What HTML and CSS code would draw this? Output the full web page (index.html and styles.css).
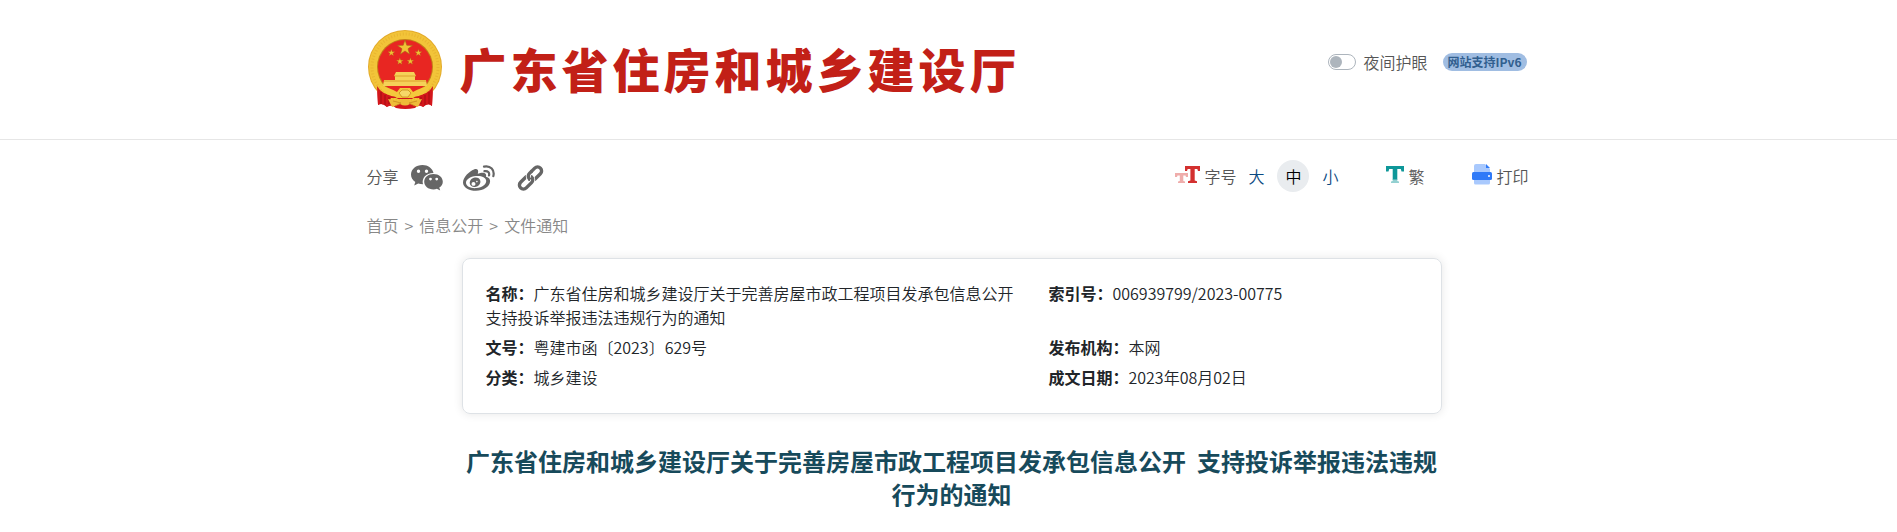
FILE: index.html
```html
<!DOCTYPE html>
<html lang="zh-CN">
<head>
    <meta charset="UTF-8">
    <meta name="viewport" content="width=device-width, initial-scale=1.0">
    <title>广东省住房和城乡建设厅</title>
    <link rel="stylesheet" href="styles.css">
</head>
<body>
    <header class="header">
        <div class="container header-inner">
            <a class="logo" href="#">
                <svg class="emblem" viewBox="0 0 74 80" aria-hidden="true">
                    <!-- 红绸 -->
                    <path d="M9 54 L20 62 H54 L65 54 L64 76 Q60 72 55 77 Q50 74 47 78 Q37 80 28 78 Q24 74 19 77 Q14 72 10 75 Z" fill="#d3161b"/>
                    <!-- 金环 -->
                    <circle cx="37" cy="37" r="37" fill="#e3aa2a"/>
                    <circle cx="37" cy="37" r="36" fill="#f2c439"/>
                    <circle cx="37" cy="37" r="33" fill="none" stroke="#e9b531" stroke-width="3" stroke-dasharray="1 2"/>
                    <path d="M9 56 Q14 65 25 65 L30 69 H44 L49 65 Q60 65 65 56 L64 76 Q60 72 55 77 L51 68 H23 L19 77 Q14 72 10 75 Z" fill="#d3161b"/>
                    <path d="M13 62 V74 M17 65 V75 M21 67 V74 M53 67 V74 M57 65 V75 M61 62 V74" stroke="#a30d12" stroke-width="1"/>
                    <circle cx="37" cy="37" r="28" fill="#c47c18"/>
                    <circle cx="37" cy="37" r="27" fill="#e82622"/>
                    <!-- 五星 -->
                    <g fill="#f0c235" stroke="#a8641a" stroke-width="0.600">
                        <path id="star" d="M37 10 L38.800 15.300 L44.500 15.400 L40 18.800 L41.600 24.200 L37 21 L32.400 24.200 L34 18.800 L29.500 15.400 L35.200 15.300 Z"/>
                        <use href="#star" transform="translate(6 14.500) scale(.47)"/>
                        <use href="#star" transform="translate(33 14.500) scale(.47)"/>
                        <use href="#star" transform="translate(14.500 23) scale(.47)"/>
                        <use href="#star" transform="translate(25 23) scale(.47)"/>
                    </g>
                    <!-- 天安门 -->
                    <path d="M28 42 H46 L48 46 H26 Z M27 46 H47 V51 H27 Z M16 50 H58 L59 56 H15 Z" fill="#f5d158"/>
                    <path d="M26 46 H48 M16 51 H58" stroke="#d59422" stroke-width="0.800"/>
                    <!-- 齿轮与麦穗 -->
                    <path d="M11 55 Q22 58 29 62 L32 58 H42 L45 62 Q52 58 63 55 Q58 66 45 67 Q37 64 29 67 Q16 66 11 55 Z" fill="#f4c83c"/>
                    <path d="M31 63 L34 60 H40 L43 63 L40 67 H34 Z" fill="#f7d768" stroke="#c98a1c" stroke-width="0.800"/>
                    <path d="M20 69 L31 71 Q37 67 43 71 L54 69 L50 77 L42 74 Q37 77 32 74 L24 77 Z" fill="#eebb38"/>
                    <path d="M25 71 L33 73 L27 76 M49 71 L41 73 L47 76" fill="none" stroke="#c98a1c" stroke-width="0.800"/>
                </svg>
                <span class="site-name">广东省住房和城乡建设厅</span>
            </a>
            <div class="header-tools">
                <input class="switch" type="checkbox" id="nightMode">
                <label for="nightMode">夜间护眼</label>
                <span class="badge">网站支持IPv6</span>
            </div>
        </div>
    </header>

    <main class="container">
        <div class="toolbar">
            <div class="share">
                <span>分享</span>
                <a href="#" aria-label="微信">
                    <svg width="32" height="26" viewBox="0 0 32 26" fill="#666">
                        <path fill-rule="evenodd" d="M11.500 0 C5 0 0 4.200 0 9.600 C0 12.700 1.600 15.300 4.300 17.100 L3.200 20.500 L7.200 18.500 C8.900 19 10.300 19.200 12 19.200 C10.300 13 15.500 7.800 22.500 8 C21.500 3.300 17 0 11.500 0 Z M7.500 4.600 a1.700 1.700 0 1 1 0 3.400 a1.700 1.700 0 1 1 0-3.400 Z M15.500 4.600 a1.700 1.700 0 1 1 0 3.400 a1.700 1.700 0 1 1 0-3.400 Z"/>
                        <path fill-rule="evenodd" d="M22.500 9 C17.200 9 13.200 12.400 13.200 16.700 C13.200 21 17.200 24.400 22.500 24.400 C23.700 24.400 24.800 24.200 25.900 23.800 L29.200 25.600 L28.300 22.600 C30.600 21.200 31.800 19.100 31.800 16.700 C31.800 12.400 27.800 9 22.500 9 Z M19.500 12.700 a1.400 1.400 0 1 1 0 2.800 a1.400 1.400 0 1 1 0-2.800 Z M25.700 12.700 a1.400 1.400 0 1 1 0 2.800 a1.400 1.400 0 1 1 0-2.800 Z"/>
                    </svg>
                </a>
                <a href="#" aria-label="微博">
                    <svg width="32" height="26" viewBox="0 0 32 26" fill="#666">
                        <path fill-rule="evenodd" d="M11 4.400 C14.500 3.200 16 5.400 14.800 8.800 C18.500 7 24.300 6.800 23 11.800 C26 12.600 27.300 14.200 27.100 16.600 C26.600 21.800 20.500 25.800 13 25.800 C5.800 25.800 0 22.400 0 17.500 C0 12 6.500 6 11 4.400 Z M13 11 C7 11.500 2.800 14.500 3 18 C3.200 21.400 7.800 23.600 13.400 23.100 C19.200 22.500 23.500 19.200 23.200 15.800 C22.900 12.500 18.500 10.500 13 11 Z"/>
                        <path fill-rule="evenodd" d="M12 12.600 C8.700 13 6.400 15.800 6.800 18.500 C7.200 21.200 10 22.500 12.900 21.800 C16 21 17.900 18.200 17.300 15.700 C16.700 13.400 14.600 12.300 12 12.600 Z M10.500 17 a2 1.900 0 1 1 0 3.800 a2 1.900 0 1 1 0-3.800 Z M13.900 15.800 a.8.8 0 1 1 0 1.600 a.8.8 0 1 1 0-1.600 Z"/>
                        <path d="M21 1.600 C27.500 .2 32 5 30.300 11.200 M21.500 6.200 C24.800 5.500 26.800 7.600 26 10.500" fill="none" stroke="#666" stroke-width="2.200" stroke-linecap="round"/>
                    </svg>
                </a>
                <a href="#" aria-label="复制链接">
                    <svg width="32" height="26" viewBox="0 0 32 26">
                        <g transform="translate(15.500 13) rotate(-45)" fill="none" stroke="#666" stroke-width="3.400">
                            <rect x="-1.500" y="-4" width="15.500" height="8" rx="4"/>
                            <path d="M-2 -4 H-2.500 A4 4 0 0 1 1.500 0 A4 4 0 0 1 -2.500 4 H-6" stroke="#fff" stroke-width="5"/>
                            <rect x="-14" y="-4" width="15.500" height="8" rx="4"/>
                            <path d="M-1.500 0 A4 4 0 0 1 2.500 -4 H5" stroke="#fff" stroke-width="5"/>
                            <path d="M-1.500 1 V0 A4 4 0 0 1 2.500 -4 H6"/>
                        </g>
                    </svg>
                </a>
            </div>
            <div class="page-tools">
                <div class="tool font-size">
                    <svg width="25" height="22" viewBox="0 0 25 22">
                        <path d="M0 9 H13 V13 H11 L10.500 11.500 H8.300 V17 L10 17.500 V19 H3 V17.500 L4.800 17 V11.500 H2.500 L2 13 H0 Z" fill="#efadab"/>
                        <path d="M10 2 H25 V7 H23 L22.300 5 H19.700 V16.500 L22 17.200 V19 H13 V17.200 L15.400 16.500 V5 H12.700 L12 7 H10 Z" fill="#d3302f"/>
                    </svg>
                    <span>字号</span>
                    <button type="button">大</button>
                    <button type="button" class="active">中</button>
                    <button type="button">小</button>
                </div>
                <a class="tool" href="#">
                    <svg width="18" height="22" viewBox="0 0 18 22">
                        <path d="M0 2 H18 V7.500 H15.500 L14.800 5 H11.300 V16 H6.700 V5 H3.200 L2.500 7.500 H0 Z" fill="#0e9799"/>
                        <path d="M6.700 15.500 H11.300 V17 L13 17.500 V19 H5 V17.500 L6.700 17 Z" fill="#93d0d1"/>
                    </svg>
                    <span>繁</span>
                </a>
                <a class="tool print" href="#">
                    <svg width="20" height="22" viewBox="0 0 20 22">
                        <path d="M4 0 H13 L18 5 V19 Q18 20.500 16.500 20.500 H3.500 Q2 20.500 2 19 V2 Q2 0 4 0 Z" fill="#a9c9fd"/>
                        <path d="M14 0 L18 4 H14 Z" fill="#2f7af8"/>
                        <rect y="8" width="20" height="8" rx="1.500" fill="#2f7af8"/>
                        <circle cx="17" cy="12" r="1" fill="#fff"/>
                    </svg>
                    <span>打印</span>
                </a>
            </div>
        </div>

        <nav class="breadcrumb">
            <a href="#">首页</a>
            <span>&gt;</span>
            <a href="#">信息公开</a>
            <span>&gt;</span>
            <a href="#">文件通知</a>
        </nav>

        <article class="article">
            <dl class="meta">
                <div><dt>名称：</dt><dd>广东省住房和城乡建设厅关于完善房屋市政工程项目发承包信息公开 支持投诉举报违法违规行为的通知</dd></div>
                <div><dt>索引号：</dt><dd>006939799/2023-00775</dd></div>
                <div><dt>文号：</dt><dd>粤建市函〔2023〕629号</dd></div>
                <div><dt>发布机构：</dt><dd>本网</dd></div>
                <div><dt>分类：</dt><dd>城乡建设</dd></div>
                <div><dt>成文日期：</dt><dd>2023年08月02日</dd></div>
            </dl>
            <h1>广东省住房和城乡建设厅关于完善房屋市政工程项目发承包信息公开&nbsp; 支持投诉举报违法违规行为的通知</h1>
        </article>
    </main>
</body>
</html>
```
FILE: styles.css
```css
* {
    box-sizing: border-box;
}
body {
    margin: 0;
    font-family: "Noto Sans CJK SC", sans-serif;
    font-size: 16px;
    font-weight: 350;
    line-height: 24px;
    color: #212529;
    background-color: #fff;
}
a {
    color: inherit;
    text-decoration: none;
}
svg {
    display: block;
}
.container {
    max-width: 1164px;
    margin: 0 auto;
}
.header {
    border-bottom: 1px solid #e6e6e6;
}
.header-inner {
    display: flex;
    justify-content: space-between;
    padding: 30px 4px 29px 1px;
}
.logo {
    display: flex;
    align-items: flex-start;
    gap: 18px;
}
.emblem {
    width: 74px;
    height: 80px;
}
.site-name {
    font-size: 47px;
    line-height: 76px;
    font-weight: 900;
    letter-spacing: 4px;
    color: #c22017;
}
.header-tools {
    display: flex;
    align-items: center;
    height: 64px;
    color: #555;
}
.switch {
    appearance: none;
    display: flex;
    align-items: center;
    width: 28px;
    height: 16px;
    margin: 0 8px 0 0;
    padding: 1px;
    border: 1px solid #adb5bd;
    border-radius: 8px;
    cursor: pointer;
}
.switch::before {
    content: "";
    width: 12px;
    height: 12px;
    border-radius: 50%;
    background-color: #adb5bd;
}
.switch:checked {
    justify-content: flex-end;
}
.badge {
    margin-left: 15px;
    padding: 0 5px;
    border-radius: 9px;
    background-color: #a0bde2;
    color: #315f8f;
    font-size: 12px;
    line-height: 18px;
    font-weight: bold;
}
.toolbar {
    display: flex;
    justify-content: space-between;
    align-items: center;
    height: 32px;
    margin-top: 20px;
    padding-right: 2px;
    color: #555;
}
.share {
    display: flex;
    align-items: center;
    gap: 20px;
}
.share span {
    margin-right: -8px;
}
.share svg {
    margin-top: 4px;
}
.page-tools {
    display: flex;
    gap: 40px;
}
.tool {
    display: flex;
    align-items: center;
    gap: 4px;
}
.print {
    margin-left: 8px;
}
.tool svg {
    margin-bottom: 2px;
}
.font-size button {
    width: 32px;
    height: 32px;
    padding: 0;
    border: none;
    border-radius: 50%;
    background: none;
    color: #0b4a82;
    font: inherit;
    cursor: pointer;
}
.font-size button.active {
    margin: 0 1px;
    background-color: #e9ecef;
    color: #000;
}
.breadcrumb {
    display: flex;
    gap: 6px;
    margin-top: 21px;
    color: #888;
}
.article {
    max-width: 986px;
    margin: 21px auto 0;
    padding-left: 6px;
}
.meta {
    display: grid;
    grid-template-columns: 563px 1fr;
    row-gap: 6px;
    margin: 0;
    padding: 22px 23px 24px;
    border: 1px solid #dee2e6;
    border-radius: 8px;
    box-shadow: 0 0 10px rgba(0,0,0,0.1);
}
.meta div {
    padding-right: 24px;
}
.meta dt,
.meta dd {
    display: inline;
    margin: 0;
}
.meta dt {
    font-weight: bold;
}
h1 {
    margin: 30px 0 0;
    font-size: 24px;
    line-height: 33px;
    text-align: center;
    color: #174a5b;
}
```
